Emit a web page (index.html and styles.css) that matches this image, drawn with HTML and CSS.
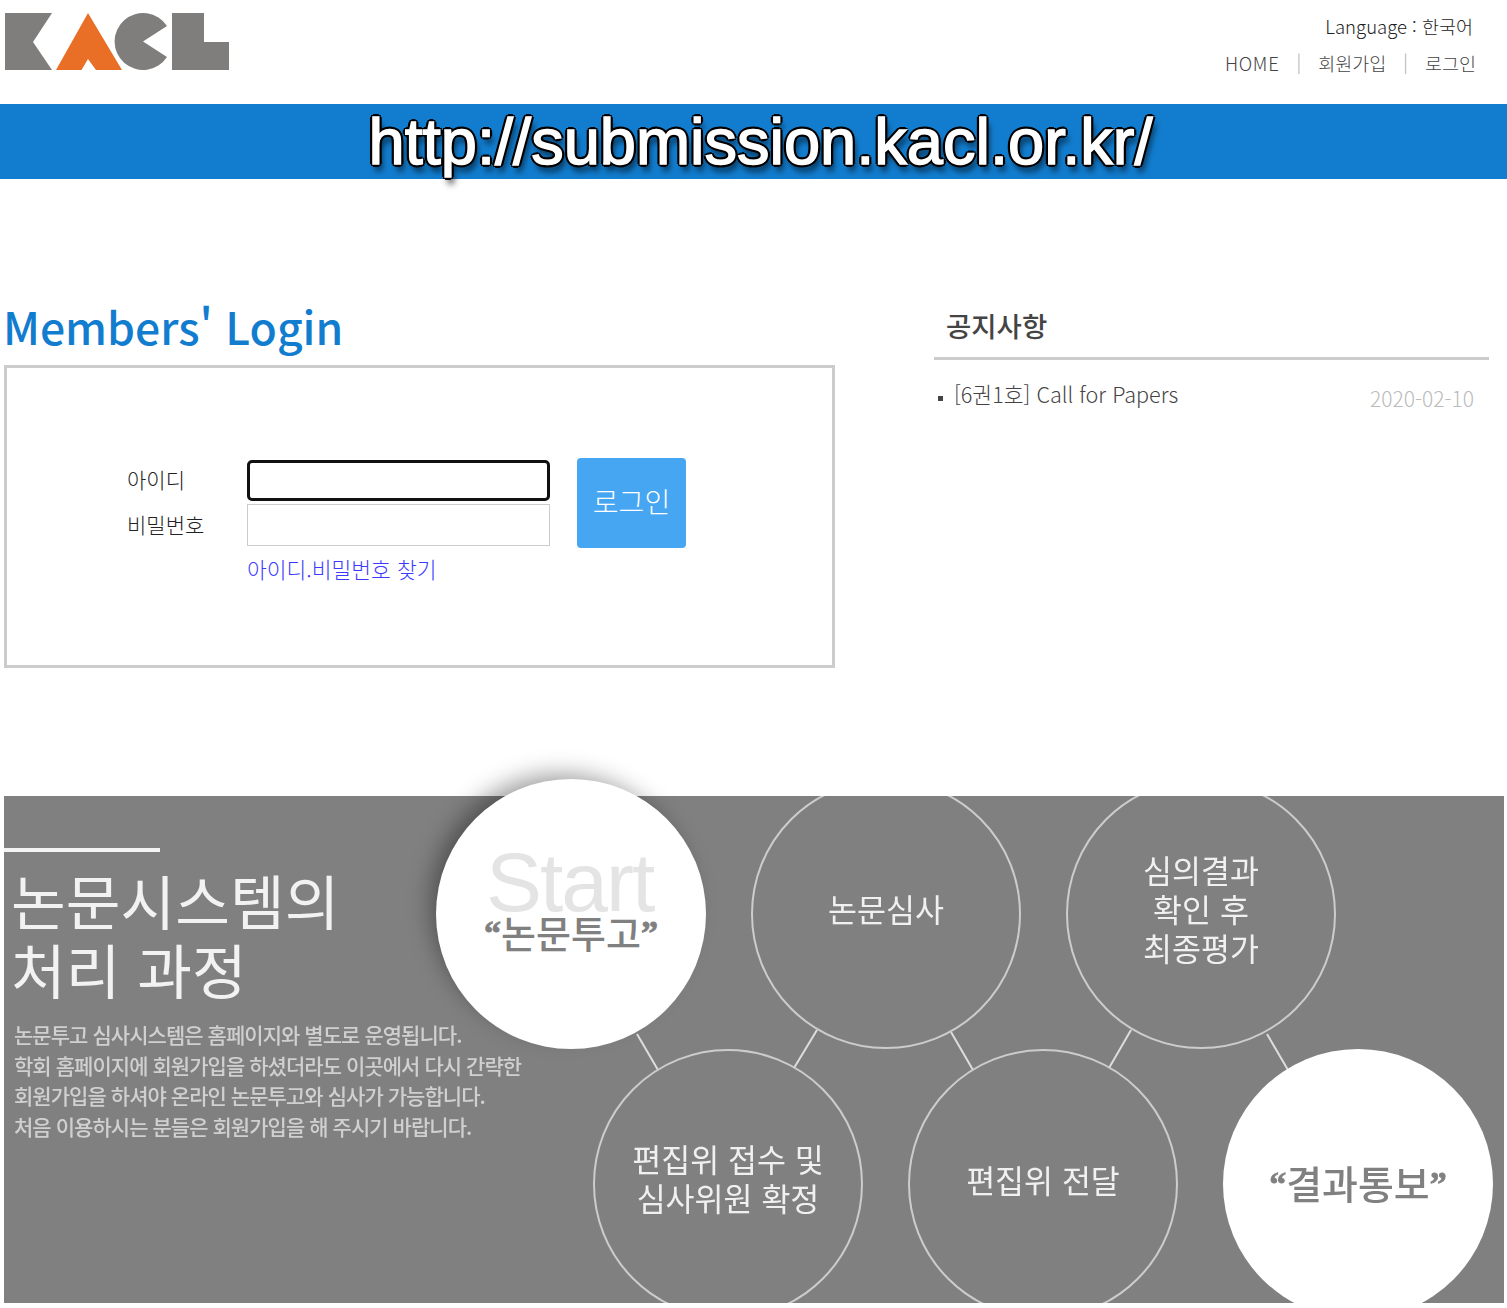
FILE: index.html
```html
<!DOCTYPE html>
<html lang="ko">
<head>
    <meta charset="UTF-8">
    <title>KACL 논문투고 시스템</title>
    <link rel="stylesheet" href="styles.css">
</head>
<body>
    <header class="top">
        <a class="logo" href="#">
            <svg width="235" height="75" viewBox="0 0 235 75">
                <path fill="#7f7e7d" d="M5 13H52L33 42L52 70H5Z"/>
                <path fill="#e96f27" d="M88 13L122 70H96L88 59L81.500 70H56Z"/>
                <path fill="#7f7e7d" d="M143 41.500L167 26A28.500 28.500 0 1 0 167 57Z"/>
                <path fill="#7f7e7d" d="M172 13H204V42H229V70H172Z"/>
            </svg>
        </a>
        <div class="top-links">
            <p class="language">Language : 한국어</p>
            <ul class="util-nav">
                <li><a class="home-link" href="#">HOME</a></li>
                <li><a href="#">회원가입</a></li>
                <li><a href="#">로그인</a></li>
            </ul>
        </div>
    </header>

    <div class="banner">http://submission.kacl.or.kr/</div>

    <main class="content">
        <section class="login">
            <h1>Members' Login</h1>
            <form class="login-box">
                <div class="login-grid">
                    <label for="user-id">아이디</label>
                    <input class="is-focus" type="text" id="user-id">
                    <label for="user-pw">비밀번호</label>
                    <input type="password" id="user-pw">
                    <a class="find-link" href="#">아이디.비밀번호 찾기</a>
                    <button type="button">로그인</button>
                </div>
            </form>
        </section>

        <section class="notice">
            <h2>공지사항</h2>
            <ul>
                <li>
                    <a href="#">[6권1호] Call for Papers</a>
                    <span class="date">2020-02-10</span>
                </li>
            </ul>
        </section>
    </main>

    <section class="process">
        <div class="process-clip">
            <svg class="process-lines" width="1500" height="507" viewBox="0 0 1500 507">
                <path d="M633 238L654 274M813 234L790 272M947 236L969 274M1127 234L1105 272M1263 238L1284 274"/>
            </svg>
            <div class="node node-review">논문심사</div>
            <div class="node node-result">심의결과<br>확인 후<br>최종평가</div>
            <div class="node node-receipt">편집위 접수 및<br>심사위원 확정</div>
            <div class="node node-deliver">편집위 전달</div>
            <div class="node node-filled node-notify"><span><i>“</i>결과통보<i>”</i></span></div>
        </div>

        <div class="process-copy">
            <h2>논문시스템의<br>처리 과정</h2>
            <p>논문투고 심사시스템은 홈페이지와 별도로 운영됩니다.<br>
            학회 홈페이지에 회원가입을 하셨더라도 이곳에서 다시 간략한<br>
            회원가입을 하셔야 온라인 논문투고와 심사가 가능합니다.<br>
            처음 이용하시는 분들은 회원가입을 해 주시기 바랍니다.</p>
        </div>

        <div class="node node-filled node-start">
            <span class="start-word">Start</span>
            <span class="start-label"><i>“</i>논문투고<i>”</i></span>
        </div>
    </section>
</body>
</html>
```

FILE: styles.css
```css
* {
    margin: 0;
    padding: 0;
    box-sizing: border-box;
}

body {
    background: #fff;
    color: #333;
    font-family: "Noto Sans CJK KR", "Noto Sans", sans-serif;
    font-weight: 300;
    overflow-x: hidden;
}

a {
    color: inherit;
    text-decoration: none;
}

ul {
    list-style: none;
}

.top {
    height: 104px;
    display: flex;
    justify-content: space-between;
}

.logo {
    display: block;
    height: 75px;
}

.top-links {
    padding: 12px 31px 0 0;
    text-align: right;
    font-size: 18.500px;
    line-height: 28px;
}

.language {
    padding-right: 3px;
    color: #222;
}

.util-nav {
    display: flex;
    margin-top: 9px;
    color: #444;
}

.util-nav li + li::before {
    content: "|";
    margin: 0 17px;
    color: #aaa;
    position: relative;
    top: -2px;
}

.home-link {
    letter-spacing: 0.700px;
}

.banner {
    height: 75px;
    padding-left: 14px;
    background: #127dcf;
    color: #fff;
    text-align: center;
    font-family: "Liberation Sans", sans-serif;
    font-weight: 400;
    font-size: 65px;
    line-height: 75px;
    -webkit-text-stroke: 1.500px #fff;
    text-shadow:
        3px 0 0 #000, -3px 0 0 #000, 0 3px 0 #000, 0 -3px 0 #000,
        2px 2px 0 #000, -2px 2px 0 #000, 2px -2px 0 #000, -2px -2px 0 #000,
        3px 7px 6px rgba(0, 0, 0, 0.7);
}

.content {
    display: flex;
    align-items: flex-start;
    padding: 120px 18px 0 4px;
}

.login {
    width: 831px;
}

.login h1 {
    height: 66px;
    margin-left: -1px;
    color: #127dcf;
    font-size: 44.500px;
    font-weight: 500;
    line-height: 54px;
}

.login-box {
    height: 303px;
    border: 3px solid #ccc;
    padding: 92px 0 0 120px;
}

.login-grid {
    display: grid;
    grid-template-columns: 120px 303px 109px;
    grid-template-rows: 41px 42px 42px;
    row-gap: 3px;
    align-items: center;
    font-size: 21px;
}

.login-grid label {
    padding-bottom: 3px;
    color: #222;
}

.login-grid input {
    width: 303px;
    height: 100%;
    border: 1px solid #ccc;
    background: #fff;
    outline: none;
}

.login-grid input.is-focus {
    border: 3px solid #111;
    border-radius: 5px;
}

.login-grid button {
    grid-column: 3;
    grid-row: 1 / span 2;
    width: 109px;
    height: 90px;
    margin: -1px 0 0 27px;
    padding-bottom: 4px;
    border: none;
    border-radius: 4px;
    background: #46a6f2;
    color: #fff;
    font: inherit;
    font-size: 28px;
}

.find-link {
    grid-column: 2;
    grid-row: 3;
    padding-bottom: 4px;
    color: #3a3aff;
    font-size: 21.500px;
    white-space: nowrap;
}

.notice {
    width: 555px;
    margin: 5px 0 0 99px;
}

.notice h2 {
    height: 56px;
    padding-left: 12px;
    border-bottom: 3px solid #ccc;
    color: #444;
    font-size: 27.500px;
    font-weight: 500;
    line-height: 42px;
}

.notice li {
    display: flex;
    justify-content: space-between;
    padding: 17px 15px 0 20px;
    position: relative;
    font-size: 21.600px;
    line-height: 34px;
    color: #444;
}

.notice li::before {
    content: "";
    position: absolute;
    left: 4px;
    top: 36px;
    width: 5px;
    height: 5px;
    background: #444;
}

.notice .date {
    margin-top: 4px;
    color: #bbb;
    font-size: 21px;
}

.process {
    position: relative;
    width: 1500px;
    height: 507px;
    margin: 128px 0 0 4px;
    background: #808080;
    color: #f0f0f0;
}

.process-clip {
    position: absolute;
    inset: 0;
    overflow: hidden;
}

.process-lines {
    position: absolute;
    left: 0;
    top: 0;
}

.process-lines path {
    fill: none;
    stroke: #ddd;
    stroke-width: 2;
}

.node {
    position: absolute;
    width: 270px;
    height: 270px;
    display: flex;
    flex-direction: column;
    align-items: center;
    justify-content: center;
    padding-bottom: 12px;
    border: 2px solid #ccc;
    border-radius: 50%;
    text-align: center;
    font-size: 31.500px;
    font-weight: 400;
    line-height: 39px;
    filter: blur(0.4px);
}

.node-filled {
    background: #fff;
    border: none;
    color: #808080;
}

.node-filled i {
    font-family: "Liberation Serif", serif;
    font-style: normal;
    font-weight: 700;
    font-size: 34px;
    vertical-align: 4px;
    -webkit-text-stroke: 0.800px #808080;
}

.node-start {
    left: 432px;
    top: -17px;
    padding-bottom: 0;
    box-shadow: -10px -10px 24px -6px rgba(0, 0, 0, 0.4);
    filter: none;
}

.node-review { left: 747px; top: -17px; }
.node-result { left: 1062px; top: -17px; }
.node-receipt { left: 589px; top: 253px; }
.node-deliver { left: 904px; top: 253px; padding-bottom: 10px; }
.node-notify { left: 1219px; top: 253px; padding-bottom: 2px; font-size: 39px; font-weight: 500; }

.start-word {
    position: absolute;
    left: 50px;
    top: 58px;
    color: #e4e4e4;
    font-family: "Liberation Sans", sans-serif;
    font-size: 84px;
    line-height: 90px;
    letter-spacing: -2px;
}

.start-label {
    position: relative;
    margin-top: 35px;
    font-size: 38px;
    font-weight: 500;
}

.process-copy {
    position: absolute;
    left: 0;
    top: 52px;
    width: 156px;
    border-top: 4px solid #f4f4f4;
    white-space: nowrap;
    filter: blur(0.4px);
}

.process-copy h2 {
    margin: 13px 0 0 7px;
    color: #f2f2f2;
    font-size: 59.500px;
    font-weight: 400;
    line-height: 69px;
}

.process-copy p {
    margin: 16px 0 0 10px;
    color: #d0d0d0;
    font-size: 21px;
    font-weight: 500;
    line-height: 30.500px;
    letter-spacing: -0.950px;
}
```
